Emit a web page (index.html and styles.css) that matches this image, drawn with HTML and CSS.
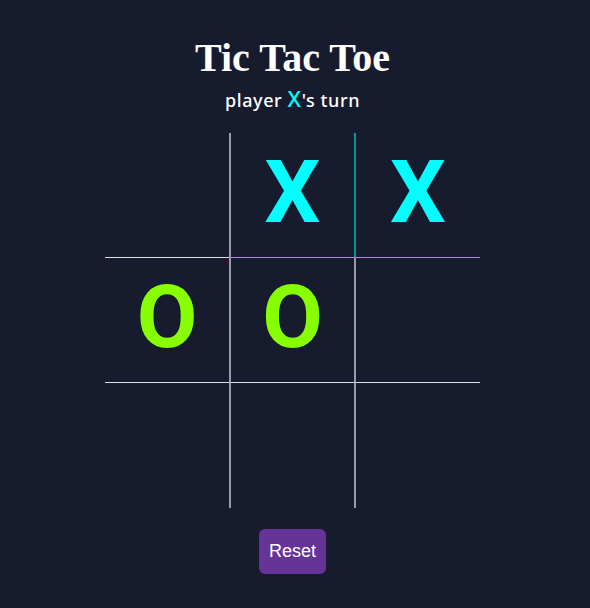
FILE: index.html
```html
<!DOCTYPE html>
<html lang="en">
<head>
<meta charset="utf-8">
<title>Tic Tac Toe</title>
<link rel="stylesheet" href="styles.css">
</head>
<body>
<main class="app">
  <h1 class="title">Tic Tac Toe</h1>
  <p class="status">player <span class="status-mark">X</span>'s turn</p>
  <div class="board">
    <div class="cell c0 r0"></div>
    <div class="cell c1 r0 x-cell hl-right hl-bottom">X</div>
    <div class="cell c2 r0 x-cell hl-left hl-bottom">X</div>
    <div class="cell c0 r1 o-cell">O</div>
    <div class="cell c1 r1 o-cell">O</div>
    <div class="cell c2 r1"></div>
    <div class="cell c0 r2"></div>
    <div class="cell c1 r2"></div>
    <div class="cell c2 r2"></div>
  </div>
  <button class="reset">Reset</button>
</main>
</body>
</html>
```
FILE: styles.css
```css
html, body {
  margin: 0;
  padding: 0;
  background: #161b2e;
}
.app {
  display: flex;
  flex-direction: column;
  align-items: center;
  padding-top: 36px;
  padding-right: 5px;
}
.title {
  margin: 0;
  font-family: "Liberation Serif", serif;
  font-weight: bold;
  font-size: 40px;
  line-height: 44px;
  color: #ffffff;
}
.status {
  margin: 6px 0 0;
  font-family: "Noto Sans", sans-serif;
  font-weight: 500;
  font-size: 18px;
  letter-spacing: 0.6px;
  line-height: 24px;
  color: #ffffff;
}
.status-mark {
  color: #00ffff;
  font-size: 22px;
}
.board {
  margin-top: 21px;
  display: grid;
  grid-template-columns: repeat(3, 125px);
  grid-template-rows: repeat(3, 125px);
}
.cell {
  box-sizing: border-box;
  display: flex;
  align-items: center;
  justify-content: center;
  padding-bottom: 6px;
  font-family: Roboto, "Liberation Sans", sans-serif;
  font-weight: bold;
  font-size: 88px;
  line-height: 1;
  border-style: solid;
  border-width: 0;
  border-color: #9a9ca5;
}
.c0 { border-right-width: 1px; }
.c1 { border-left-width: 1px; border-right-width: 1px; }
.c2 { border-left-width: 1px; }
.r0, .r1 { border-bottom-width: 1px; border-bottom-color: #dcdde0; }
.board .hl-right { border-right-color: #0a949c; }
.board .hl-left { border-left-color: #0a949c; }
.board .hl-bottom { border-bottom: 1px solid #00d8e0; }
.x-cell { color: #00ffff; }
.o-cell { color: #88ff00; }
.reset {
  margin-top: 21px;
  padding: 12px 10px;
  border: none;
  border-radius: 6px;
  background: #663399;
  color: #ffffff;
  font-family: "Liberation Sans", Arial, sans-serif;
  font-size: 18px;
  line-height: 21px;
}
```
